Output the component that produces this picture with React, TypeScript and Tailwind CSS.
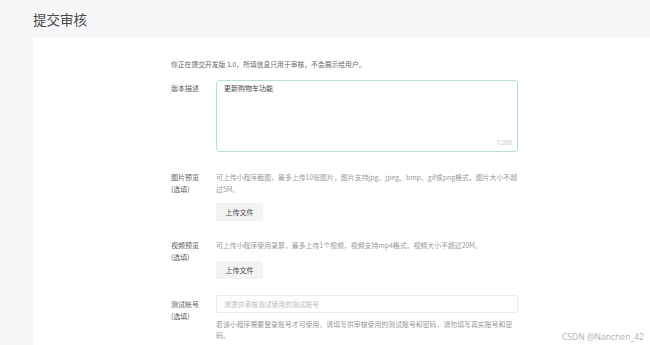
import React from "react";

const font = { fontFamily: '"Noto Sans CJK SC", "Noto Sans", sans-serif' };

function Label({ main, optional }: { main: string; optional?: boolean }) {
  return (
    <div className="w-[45px] shrink-0 text-[7px] leading-[12px] text-[#5c5c5c]">
      <div>{main}</div>
      {optional && <div>(选填)</div>}
    </div>
  );
}

function UploadButton({ className }: { className?: string }) {
  return (
    <div
      className={
        "flex h-[18px] w-[47px] items-center justify-center rounded-[2px] bg-[#f3f3f3] text-[7px] text-[#4a4a4a] " +
        (className ?? "")
      }
    >
      上传文件
    </div>
  );
}

export default function App() {
  return (
    <div className="relative h-[345px] w-[650px] overflow-hidden bg-[#f6f7f9]" style={font}>
      <div className="pl-[33px] pt-[10px] h-[37px] text-[13.5px] leading-[18px] text-[#4a4a4a]">提交审核</div>
      <div className="ml-[33px] h-[308px] bg-white pl-[138px] pt-[21px]">
        <div className="text-[6.8px] leading-[12px] text-[#666]">
          你正在提交开发版 1.0，所填信息只用于审核，不会展示给用户。
        </div>

        {/* 版本描述 */}
        <div className="mt-[10px] flex">
          <div className="pt-[2px]">
            <Label main="版本描述" />
          </div>
          <div className="relative h-[72px] w-[302px] rounded-[3px] border border-[#b3e3c9] px-[7px] pt-[1px] text-[7px] leading-[12px] text-[#4a4a4a]">
            更新购物车功能
            <div className="absolute bottom-[3px] right-[5px] text-[6px] leading-[10px] text-[#bdbdbd]">7/200</div>
          </div>
        </div>

        {/* 图片预览 */}
        <div className="mt-[19px] flex">
          <Label main="图片预览" optional />
          <div className="w-[302px]">
            <div className="text-[6.9px] leading-[12px] text-[#999]">
              可上传小程序截图，最多上传10张图片，图片支持jpg、jpeg、bmp、gif或png格式，图片大小不超过5M。
            </div>
            <UploadButton className="mt-[8px]" />
          </div>
        </div>

        {/* 视频预览 */}
        <div className="mt-[18px] flex">
          <Label main="视频预览" optional />
          <div className="w-[302px]">
            <div className="text-[6.9px] leading-[12px] text-[#999]">
              可上传小程序使用录屏，最多上传1个视频，视频支持mp4格式，视频大小不超过20M。
            </div>
            <UploadButton className="mt-[10px]" />
          </div>
        </div>

        {/* 测试帐号 */}
        <div className="mt-[16px] flex">
          <div className="pt-[3px]">
            <Label main="测试帐号" optional />
          </div>
          <div className="w-[302px]">
            <div className="flex h-[18px] items-center rounded-[2px] border border-[#ebebeb] px-[7px] text-[6.8px] text-[#bbb]">
              请提供审核测试使用的测试账号
            </div>
            <div className="mt-[6px] text-[6.9px] leading-[11px] text-[#999]">
              若该小程序需要登录账号才可使用，请填写供审核使用的测试账号和密码，请勿填写真实账号和密码。
            </div>
          </div>
        </div>
      </div>
      <div
        className="absolute left-[562px] top-[331px] text-[8.5px] leading-[12px] text-[#b5b5b5]"
        style={{ fontFamily: '"Noto Sans", "Noto Sans CJK SC", sans-serif' }}
      >
        CSDN @Nanchen_42
      </div>
    </div>
  );
}
